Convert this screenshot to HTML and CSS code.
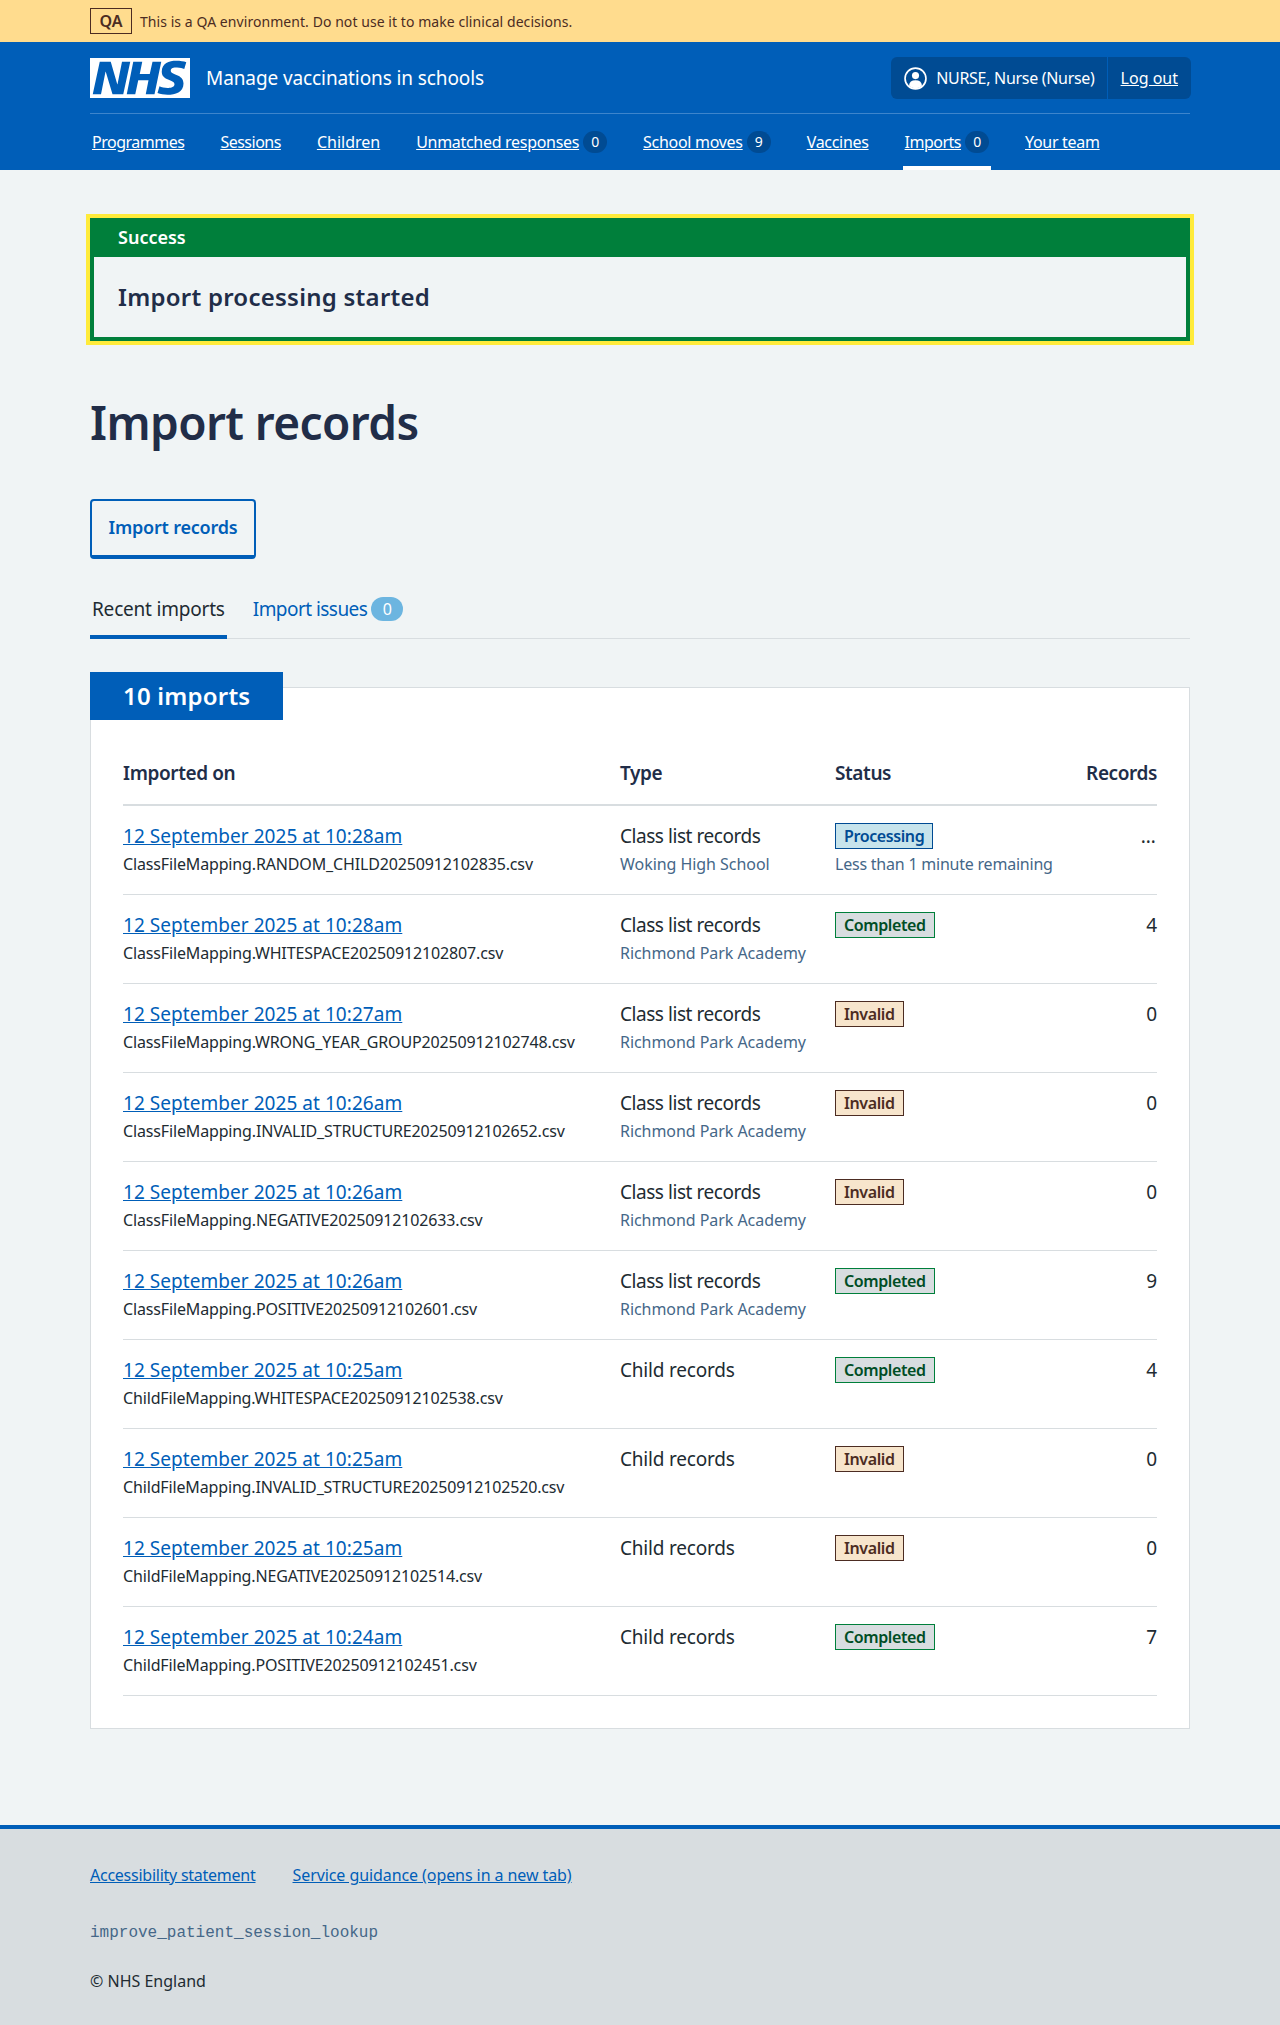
FILE: index.html
```html
<!DOCTYPE html>
<html lang="en">
<head>
    <meta charset="UTF-8">
    <meta name="viewport" content="width=device-width, initial-scale=1.0">
    <title>Import records - Manage vaccinations in schools</title>
    <link rel="stylesheet" href="styles.css">
</head>
<body>

    <div class="env-bar">
        <div class="wrapper env-inner">
            <strong class="env-tag">QA</strong>
            <span class="env-text">This is a QA environment. Do not use it to make clinical decisions.</span>
        </div>
    </div>

    <header class="header">
        <div class="wrapper">
            <div class="header-top">
                <a class="brand" href="#">
                    <svg class="logo" viewBox="0 0 40 16" aria-label="NHS" role="img">
                        <path fill="#fff" d="M0 0h40v16H0z"/>
                        <path fill="#005eb8" d="M3.9 1.5h4.4l2.6 9h.1l1.8-9h3.3l-2.8 13H9l-2.7-9h-.1l-1.8 9H1.1M17.3 1.5h3.6l-1 4.9h4l1.1-4.9h3.5l-2.7 13h-3.5l1.1-5.6h-4.1l-1.2 5.6h-3.4M37.7 4.4c-.7-.3-1.6-.6-2.9-.6-1.4 0-2.5.2-2.5 1.3 0 1.8 5.1 1.2 5.1 5.1 0 3.6-3.3 4.5-6.4 4.5-1.3 0-2.9-.3-4-.7l.8-2.7c.7.4 2.1.7 3.2.7s2.8-.2 2.8-1.5c0-2.1-5.1-1.3-5.1-5 0-3.4 2.9-4.4 5.8-4.4 1.6 0 3.1.2 4 .6"/>
                    </svg>
                    <span class="service-name">Manage vaccinations in schools</span>
                </a>
                <div class="account">
                    <span class="account-user">
                        <svg class="user-icon" viewBox="0 0 22 22" aria-hidden="true">
                            <circle cx="11" cy="11" r="10" fill="none" stroke="#fff" stroke-width="1.600"/>
                            <circle cx="11" cy="8.200" r="3.400" fill="#fff"/>
                            <path fill="#fff" d="M4.800 17.600c.3-3.200 2.400-5 6.200-5s5.900 1.800 6.200 5C15.700 19.200 13.500 20.200 11 20.200s-4.700-1-6.200-2.600z"/>
                        </svg>
                        NURSE, Nurse (Nurse)
                    </span>
                    <a class="account-link" href="#">Log out</a>
                </div>
            </div>
            <nav class="nav">
                <a class="nav-item nav-tight" href="#"><span class="nav-text">Programmes</span></a>
                <a class="nav-item nav-tight" href="#"><span class="nav-text">Sessions</span></a>
                <a class="nav-item nav-wide" href="#"><span class="nav-text">Children</span></a>
                <a class="nav-item" href="#"><span class="nav-text">Unmatched responses</span><span class="count">0</span></a>
                <a class="nav-item" href="#"><span class="nav-text">School moves</span><span class="count">9</span></a>
                <a class="nav-item" href="#"><span class="nav-text">Vaccines</span></a>
                <a class="nav-item nav-tight nav-item-current" href="#"><span class="nav-text">Imports</span><span class="count">0</span></a>
                <a class="nav-item" href="#"><span class="nav-text">Your team</span></a>
            </nav>
        </div>
    </header>

    <main class="wrapper main">
        <div class="banner">
            <h2 class="banner-title">Success</h2>
            <p class="banner-body">Import processing started</p>
        </div>

        <h1 class="page-title">Import records</h1>

        <a class="button" href="#">Import records</a>

        <div class="tabs">
            <a class="tab tab-current" href="#">Recent imports</a>
            <a class="tab tab-issues" href="#">Import issues<span class="tab-count">0</span></a>
        </div>

        <section class="card">
            <h3 class="card-heading">10 imports</h3>
            <table class="table">
                <thead>
                    <tr>
                        <th class="col-date">Imported on</th>
                        <th class="col-type">Type</th>
                        <th class="col-status">Status</th>
                        <th class="num">Records</th>
                    </tr>
                </thead>
                <tbody>
                    <tr>
                        <td><a class="date" href="#">12 September 2025 at 10:28am</a><div class="file">ClassFileMapping.RANDOM_CHILD20250912102835.csv</div></td>
                        <td><span class="type">Class list records</span><div class="sub">Woking High School</div></td>
                        <td><span class="tag tag-blue">Processing</span><div class="sub sub-status">Less than 1 minute remaining</div></td>
                        <td class="num"><span class="pending">…</span></td>
                    </tr>
                    <tr>
                        <td><a class="date" href="#">12 September 2025 at 10:28am</a><div class="file">ClassFileMapping.WHITESPACE20250912102807.csv</div></td>
                        <td><span class="type">Class list records</span><div class="sub">Richmond Park Academy</div></td>
                        <td><span class="tag tag-green">Completed</span></td>
                        <td class="num">4</td>
                    </tr>
                    <tr>
                        <td><a class="date" href="#">12 September 2025 at 10:27am</a><div class="file">ClassFileMapping.WRONG_YEAR_GROUP20250912102748.csv</div></td>
                        <td><span class="type">Class list records</span><div class="sub">Richmond Park Academy</div></td>
                        <td><span class="tag tag-orange">Invalid</span></td>
                        <td class="num">0</td>
                    </tr>
                    <tr>
                        <td><a class="date" href="#">12 September 2025 at 10:26am</a><div class="file">ClassFileMapping.INVALID_STRUCTURE20250912102652.csv</div></td>
                        <td><span class="type">Class list records</span><div class="sub">Richmond Park Academy</div></td>
                        <td><span class="tag tag-orange">Invalid</span></td>
                        <td class="num">0</td>
                    </tr>
                    <tr>
                        <td><a class="date" href="#">12 September 2025 at 10:26am</a><div class="file">ClassFileMapping.NEGATIVE20250912102633.csv</div></td>
                        <td><span class="type">Class list records</span><div class="sub">Richmond Park Academy</div></td>
                        <td><span class="tag tag-orange">Invalid</span></td>
                        <td class="num">0</td>
                    </tr>
                    <tr>
                        <td><a class="date" href="#">12 September 2025 at 10:26am</a><div class="file">ClassFileMapping.POSITIVE20250912102601.csv</div></td>
                        <td><span class="type">Class list records</span><div class="sub">Richmond Park Academy</div></td>
                        <td><span class="tag tag-green">Completed</span></td>
                        <td class="num">9</td>
                    </tr>
                    <tr>
                        <td><a class="date" href="#">12 September 2025 at 10:25am</a><div class="file">ChildFileMapping.WHITESPACE20250912102538.csv</div></td>
                        <td><span class="type-child">Child records</span></td>
                        <td><span class="tag tag-green">Completed</span></td>
                        <td class="num">4</td>
                    </tr>
                    <tr>
                        <td><a class="date" href="#">12 September 2025 at 10:25am</a><div class="file">ChildFileMapping.INVALID_STRUCTURE20250912102520.csv</div></td>
                        <td><span class="type-child">Child records</span></td>
                        <td><span class="tag tag-orange">Invalid</span></td>
                        <td class="num">0</td>
                    </tr>
                    <tr>
                        <td><a class="date" href="#">12 September 2025 at 10:25am</a><div class="file">ChildFileMapping.NEGATIVE20250912102514.csv</div></td>
                        <td><span class="type-child">Child records</span></td>
                        <td><span class="tag tag-orange">Invalid</span></td>
                        <td class="num">0</td>
                    </tr>
                    <tr>
                        <td><a class="date" href="#">12 September 2025 at 10:24am</a><div class="file">ChildFileMapping.POSITIVE20250912102451.csv</div></td>
                        <td><span class="type-child">Child records</span></td>
                        <td><span class="tag tag-green">Completed</span></td>
                        <td class="num">7</td>
                    </tr>
                </tbody>
            </table>
        </section>
    </main>

    <footer class="footer">
        <div class="wrapper">
            <div class="footer-links">
                <a href="#">Accessibility statement</a>
                <a href="#">Service guidance (opens in a new tab)</a>
            </div>
            <p class="footer-branch">improve_patient_session_lookup</p>
            <p class="footer-copy">© NHS England</p>
        </div>
    </footer>

</body>
</html>
```

FILE: styles.css
```css
* {
    box-sizing: border-box;
}
body {
    margin: 0;
    font-family: "Noto Sans", Arial, sans-serif;
    font-size: 19px;
    line-height: 28px;
    background-color: #f0f4f5;
    color: #212b32;
}
a {
    color: #005eb8;
}
.wrapper {
    width: 1100px;
    margin: 0 auto;
}

/* environment bar */
.env-bar {
    height: 42px;
    padding-top: 8px;
    background: #ffdc8e;
    color: #4c2c22;
    font-size: 14px;
}
.env-inner {
    display: flex;
    align-items: center;
    gap: 8px;
    height: 26px;
}
.env-tag {
    width: 42px;
    height: 26px;
    border: 1px solid #4c2c22;
    text-align: center;
    font-size: 16px;
    font-weight: 600;
    line-height: 24px;
}
.env-text {
    margin-top: 1px;
    letter-spacing: 0.06px;
}

/* header */
.header {
    height: 128px;
    background: #005eb8;
    color: #fff;
    font-size: 16px;
    line-height: 24px;
    letter-spacing: -0.3px;
}
.header a {
    color: #fff;
}
.header-top {
    display: flex;
    justify-content: space-between;
    height: 72px;
    padding-top: 15px;
    border-bottom: 1px solid #3d85cc;
}
.brand {
    display: flex;
    align-items: center;
    gap: 16px;
    height: 40px;
    margin-top: 1px;
    text-decoration: none;
}
.logo {
    width: 100px;
    height: 40px;
}
.service-name {
    font-size: 19px;
    letter-spacing: -0.1px;
}
.account {
    display: flex;
    align-items: center;
    height: 42px;
    margin-right: -1px;
    background: #004b93;
    border-radius: 6px;
}
.account-user {
    display: flex;
    align-items: center;
    gap: 9px;
    height: 42px;
    padding: 0 12px 0 13px;
    border-right: 1px solid #005eb8;
}
.user-icon {
    width: 23px;
    height: 23px;
}
.account-link {
    padding: 0 13px;
    letter-spacing: 0;
}
.nav {
    display: flex;
    gap: 32px;
    height: 56px;
}
.nav-item {
    display: flex;
    align-items: center;
    gap: 4px;
    height: 56px;
    padding: 0 2px;
    text-decoration: none;
}
.nav-tight {
    letter-spacing: -0.5px;
}
.nav-wide {
    letter-spacing: 0;
}
.nav-text {
    text-decoration: underline;
}
.nav-item-current {
    border-bottom: 4px solid #fff;
    padding-top: 4px;
}
.count {
    width: 24px;
    height: 22px;
    border-radius: 11px;
    background: #004b93;
    text-align: center;
    font-size: 14px;
    line-height: 22px;
}

/* success banner */
.main {
    padding-top: 48px;
}
.banner {
    border: 4px solid #007f3b;
    box-shadow: 0 0 0 4px #ffeb3b;
}
.banner-title {
    margin: 0;
    height: 35px;
    padding: 1px 24px 0;
    background: #007f3b;
    color: #fff;
    font-size: 18px;
    font-weight: 600;
    line-height: 28px;
}
.banner-body {
    margin: 0;
    padding: 24px;
    color: #212d48;
    font-size: 24px;
    font-weight: 600;
    line-height: 32px;
    letter-spacing: 0.25px;
}

.page-title {
    margin: 53px 0 49px;
    color: #212d48;
    font-size: 46px;
    font-weight: 600;
    line-height: 56px;
    letter-spacing: -0.6px;
}

/* secondary button */
.button {
    display: block;
    width: 166px;
    height: 60px;
    border: 2px solid #005eb8;
    border-bottom-width: 4px;
    border-radius: 4px;
    text-align: center;
    font-size: 18px;
    font-weight: 600;
    line-height: 52px;
    letter-spacing: -0.2px;
    text-decoration: none;
}

/* tabs */
.tabs {
    display: flex;
    gap: 24px;
    margin-top: 36px;
    border-bottom: 1px solid #d8dde0;
    height: 44px;
}
.tab {
    display: flex;
    align-items: flex-start;
    gap: 4px;
    padding: 0 2px;
    text-decoration: none;
}
.tab-current {
    color: #212b32;
    border-bottom: 4px solid #005eb8;
    height: 44px;
    letter-spacing: -0.2px;
}
.tab-issues {
    letter-spacing: -0.55px;
}
.tab-count {
    width: 32px;
    height: 24px;
    margin-top: 2px;
    border-radius: 12px;
    background: #6cb5e0;
    color: #fff;
    text-align: center;
    font-size: 16px;
    line-height: 24px;
    letter-spacing: 0;
}

/* card with table */
.card {
    margin-top: 48px;
    padding: 0 32px 32px;
    background: #fff;
    border: 1px solid #d8dde0;
}
.card-heading {
    width: 193px;
    height: 48px;
    margin: -16px 0 0 -33px;
    padding-left: 33px;
    background: #005eb8;
    color: #fff;
    font-size: 24px;
    font-weight: 600;
    line-height: 48px;
    letter-spacing: 0.2px;
}
.table {
    width: 100%;
    border-collapse: collapse;
    table-layout: fixed;
}
th {
    padding: 39px 0 17px;
    border-bottom: 2px solid #d8dde0;
    text-align: left;
    color: #212d48;
    font-weight: 600;
    letter-spacing: -0.4px;
}
td {
    height: 89px;
    padding: 16px 0;
    border-bottom: 1px solid #d8dde0;
    vertical-align: top;
}
.col-date {
    width: 497px;
}
.col-type {
    width: 215px;
}
.col-status {
    width: 200px;
}
th.num, td.num {
    text-align: right;
}
.pending {
    letter-spacing: 1.3px;
}
.date {
    letter-spacing: 0.05px;
}
.type {
    letter-spacing: -0.45px;
}
.type-child {
    letter-spacing: -0.2px;
}
.file {
    font-size: 16px;
    letter-spacing: -0.15px;
}
.sub {
    font-size: 16px;
    color: #456788;
    white-space: nowrap;
    letter-spacing: -0.05px;
}
.sub-status {
    letter-spacing: -0.22px;
}
.tag {
    display: block;
    width: fit-content;
    height: 26px;
    margin-top: 1px;
    margin-bottom: 1px;
    padding: 0 8px;
    border: 1px solid;
    font-size: 16px;
    font-weight: 600;
    line-height: 24px;
    letter-spacing: -0.4px;
}
.tag-blue {
    background: #c7e4ec;
    border-color: #004b93;
    color: #004b93;
}
.tag-green {
    background: #d8dde0;
    border-color: #007f3b;
    color: #004d25;
}
.tag-orange {
    background: #f7e5cc;
    border-color: #4c2c22;
    color: #4c2c22;
}

/* footer */
.footer {
    height: 200px;
    margin-top: 96px;
    padding-top: 34px;
    border-top: 4px solid #005eb8;
    background: #d8dde0;
    font-size: 16px;
    line-height: 24px;
}
.footer-links {
    display: flex;
    gap: 37px;
    letter-spacing: -0.25px;
}
.footer-links a + a {
    letter-spacing: -0.08px;
}
.footer-branch {
    margin: 34px 0 0;
    font-family: "Liberation Mono", monospace;
    color: #456788;
}
.footer-copy {
    margin: 24px 0 0;
}
```
